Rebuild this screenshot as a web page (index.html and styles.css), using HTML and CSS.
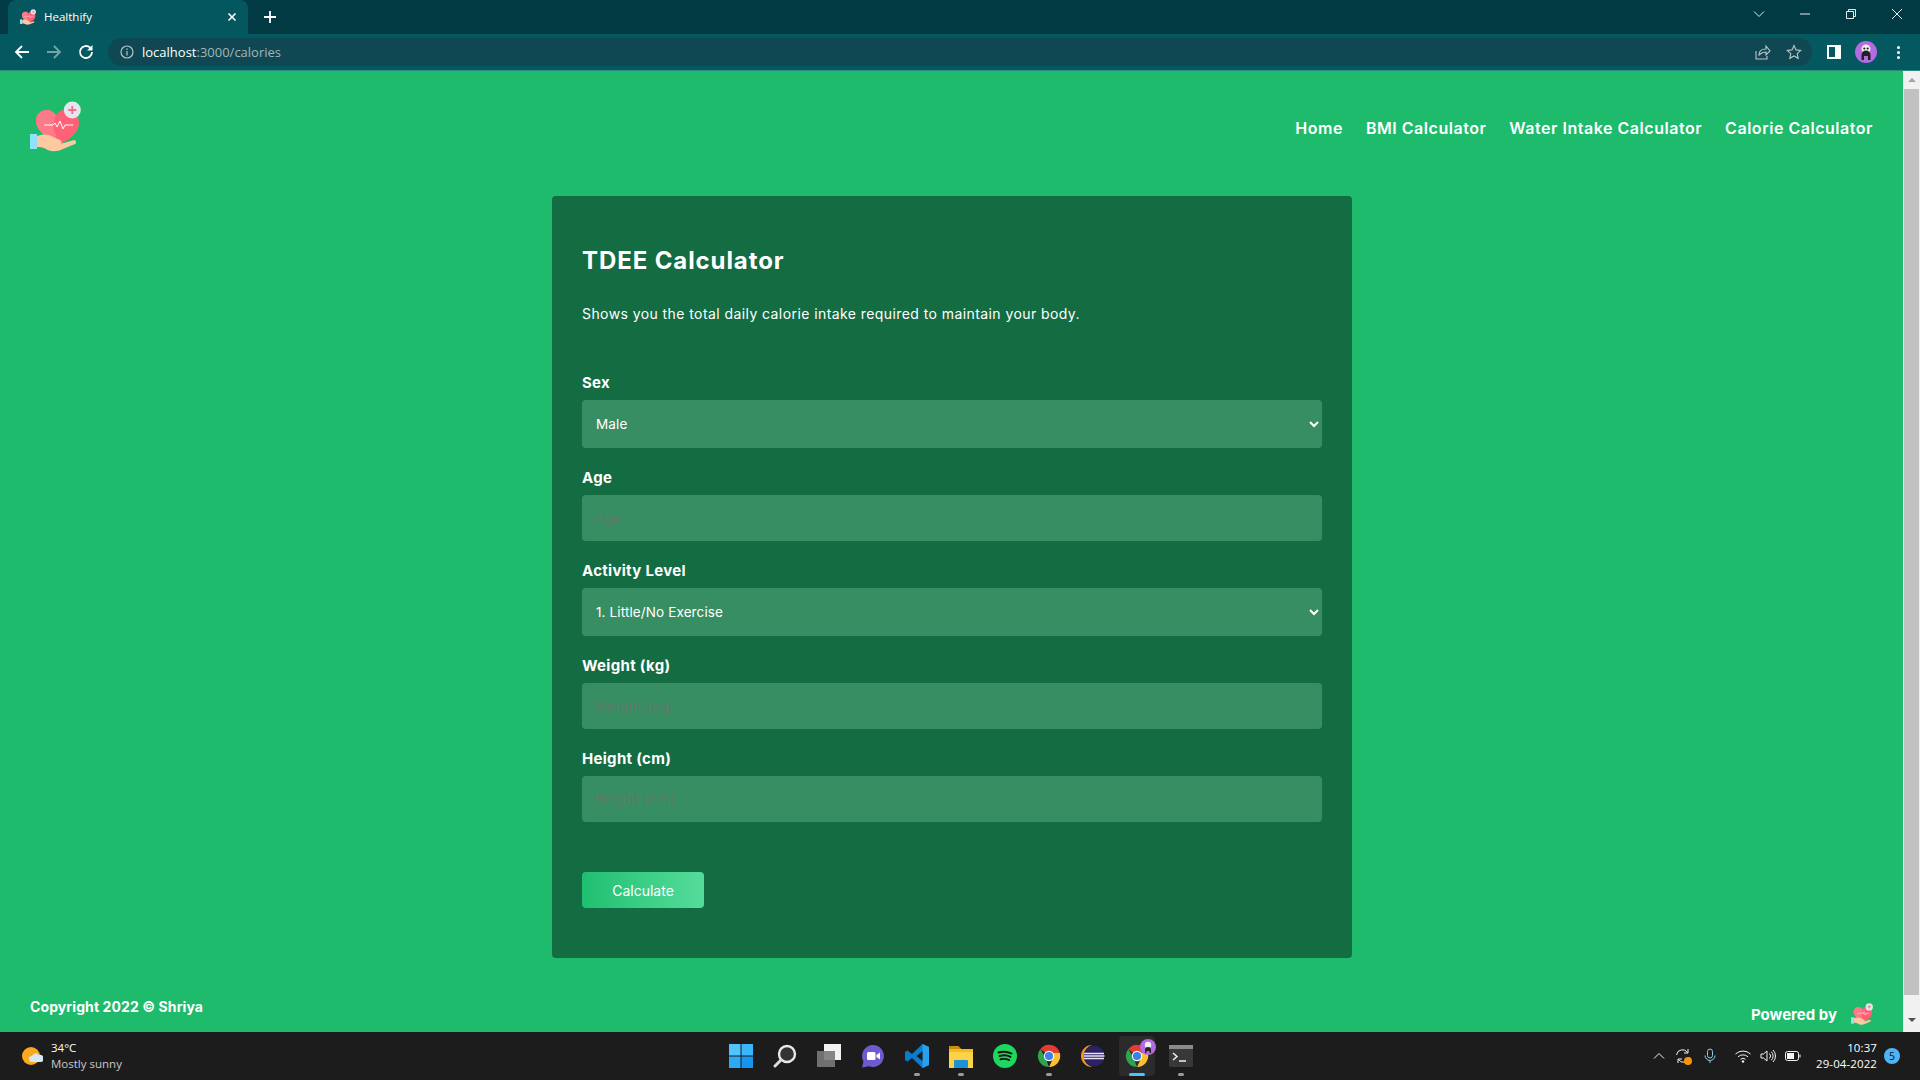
FILE: index.html
```html
<!DOCTYPE html>
<html lang="en">
<head>
    <meta charset="UTF-8">
    <meta name="viewport" content="width=device-width, initial-scale=1.0">
    <title>Healthify</title>
    <link rel="stylesheet" href="styles.css">
</head>
<body>
    <svg class="defs" width="0" height="0">
        <symbol id="logo" viewBox="0 0 51 51">
            <path d="M28 44C14 36 6 28 6 20 6 13 11 9 17 9c4 0 7 2 9 5 3-4 7-6 12-6 7 1 11 7 11 14 0 9-9 17-21 22z" fill="#ff6276"/>
            <path d="M28 44C14 36 6 28 6 20 6 13 11 9 17 9c4 0 7 2 9 5-3 7-4 14 0 20-1 4 0 7 2 10z" fill="#fd7a88"/>
            <path d="M14 24h9l2-2 2 4 3-6 3 8 2-4h8" fill="none" stroke="#fff" stroke-width="1"/>
            <circle cx="42.300" cy="9" r="8.500" fill="#e3e6f0"/>
            <path d="M42.300 5v8M38.300 9h8" stroke="#fb6c80" stroke-width="1.800"/>
            <path d="M7 35c5-2 10-2 14 0l9 4c3 2 1 4-2 4l6-1 10-3c2 0 3 3 1 4l-12 5c-6 3-12 3-17 0-4-2-6-2-9-2z" fill="#fdc9a0"/>
            <rect x="0" y="33" width="7" height="15" fill="#8fe2fb"/>
        </symbol>
        <symbol id="chrome" viewBox="0 0 24 24">
            <path d="M12 12 3.400 5A11 11 0 0 1 22.800 9H12z" fill="#e53c2f"/>
            <path d="M12 23A11 11 0 0 1 3.400 5l5 8.500L12 23z" fill="#2fa44f"/>
            <path d="M12 23A11 11 0 0 0 22.800 9H12l3.500 6.500z" fill="#fbc02d"/>
            <circle cx="12" cy="12" r="5.200" fill="#fff"/>
            <circle cx="12" cy="12" r="4.100" fill="#3b82e8"/>
        </symbol>
    </svg>

    <div class="tabstrip">
        <div class="tab">
            <svg class="tab-favicon"><use href="#logo"/></svg>
            <span class="tab-title">Healthify</span>
            <svg class="tab-close" viewBox="0 0 10 10"><path d="M1.500 1.500l7 7M8.500 1.500l-7 7"/></svg>
        </div>
        <svg class="new-tab" viewBox="0 0 12 12"><path d="M6 0v12M0 6h12"/></svg>
        <div class="window-controls">
            <svg viewBox="0 0 12 12"><path d="M1 3.500l5 5 5-5"/></svg>
            <svg viewBox="0 0 12 12"><path d="M1 6h10"/></svg>
            <svg viewBox="0 0 12 12"><path d="M1.500 3.500h7v7h-7zM3.500 3.500v-2h7v7h-2"/></svg>
            <svg viewBox="0 0 12 12"><path d="M1 1l10 10M11 1L1 11"/></svg>
        </div>
    </div>

    <div class="toolbar">
        <svg class="tool-icon" viewBox="0 0 16 16"><path d="M15 8H2M8 2L2 8l6 6"/></svg>
        <svg class="tool-icon dim" viewBox="0 0 16 16"><path d="M1 8h13M8 2l6 6-6 6"/></svg>
        <svg class="tool-icon" viewBox="0 0 16 16"><path d="M14 8a6 6 0 1 1-1.800-4.300"/><path class="solid" d="M14.500 1v5.500H9z"/></svg>
        <div class="omnibox">
            <svg class="info-icon" viewBox="0 0 14 14"><circle cx="7" cy="7" r="6"/><path d="M7 6v4.500M7 3.500v1.500"/></svg>
            <span class="url"><b>localhost</b>:3000/calories</span>
            <svg class="omni-icon share" viewBox="0 0 16 16"><path d="M1 7v8h11v-3M4 11c0-4 3-6 7-6V2l4 5-4 4V8c-3 0-5 1-7 3z"/></svg>
            <svg class="omni-icon" viewBox="0 0 16 16"><path d="M8 1.500l2 4.400 4.700.5-3.500 3.200 1 4.700L8 11.900l-4.200 2.400 1-4.700L1.300 6.400 6 5.900z"/></svg>
        </div>
        <svg class="panel-icon" viewBox="0 0 14 14"><rect width="14" height="14" fill="#fff"/><rect x="2" y="2" width="6" height="10" fill="#03595f"/></svg>
        <svg class="avatar" viewBox="0 0 22 22">
            <circle cx="11" cy="11" r="11" fill="#b36be0"/>
            <circle cx="11" cy="8" r="4.500" fill="#eee"/>
            <path d="M6.500 19v-5a4.500 4.500 0 0 1 9 0v5h-2.500v-4h-4v4z" fill="#222"/>
            <circle cx="9.300" cy="7.500" r="1.100" fill="#222"/><circle cx="12.700" cy="7.500" r="1.100" fill="#222"/>
        </svg>
        <div class="kebab"><i></i><i></i><i></i></div>
    </div>

    <div class="viewport">
        <div class="page">
            <header class="site-header">
                <svg class="site-logo"><use href="#logo"/></svg>
                <nav class="site-nav">
                    <a href="#">Home</a>
                    <a href="#">BMI Calculator</a>
                    <a href="#">Water Intake Calculator</a>
                    <a href="#">Calorie Calculator</a>
                </nav>
            </header>

            <section class="card">
                <h1>TDEE Calculator</h1>
                <p>Shows you the total daily calorie intake required to maintain your body.</p>

                <form class="calc-form">
                    <label for="sex">Sex</label>
                    <select id="sex" class="field">
                        <option>Male</option>
                        <option>Female</option>
                    </select>

                    <label for="age">Age</label>
                    <input type="number" id="age" class="field" placeholder="Age">

                    <label for="activity">Activity Level</label>
                    <select id="activity" class="field">
                        <option>1. Little/No Exercise</option>
                        <option>2. Light Exercise</option>
                        <option>3. Moderate Exercise</option>
                    </select>

                    <label for="weight">Weight (kg)</label>
                    <input type="number" id="weight" class="field" placeholder="Weight (kg)">

                    <label for="height">Height (cm)</label>
                    <input type="number" id="height" class="field" placeholder="Height (cm)">

                    <button type="submit">Calculate</button>
                </form>
            </section>

            <footer class="site-footer">
                <span class="copyright">Copyright 2022 © Shriya</span>
                <span class="powered">Powered by <svg class="powered-logo"><use href="#logo"/></svg></span>
            </footer>
        </div>

        <div class="scrollbar">
            <span class="scroll-up"></span>
            <span class="scroll-thumb"></span>
            <span class="scroll-down"></span>
        </div>
    </div>

    <div class="taskbar">
        <div class="weather">
            <svg class="weather-icon" viewBox="0 0 22 22">
                <circle cx="10" cy="11" r="9" fill="#f9a91f"/>
                <path d="M11 17a3 3 0 0 1 0-6 4 4 0 0 1 7-1 3.500 3.500 0 0 1 2 7z" fill="#d7e6f5"/>
            </svg>
            <div class="weather-text">
                <span class="temp">34°C</span>
                <span class="sky">Mostly sunny</span>
            </div>
        </div>

        <div class="task-icons">
            <div class="task-icon">
                <svg viewBox="0 0 24 24">
                    <rect x="0" y="0" width="11.500" height="11.500" fill="#4fc6fb"/><rect x="12.500" y="0" width="11.500" height="11.500" fill="#3bb6fa"/>
                    <rect x="0" y="12.500" width="11.500" height="11.500" fill="#2ba8f6"/><rect x="12.500" y="12.500" width="11.500" height="11.500" fill="#1794f0"/>
                </svg>
            </div>
            <div class="task-icon">
                <svg viewBox="0 0 24 24"><circle cx="14" cy="10" r="8" fill="#333" stroke="#e8e8e8" stroke-width="2.400"/><path d="M8 16l-6 6" stroke="#ddd" stroke-width="3" stroke-linecap="round"/></svg>
            </div>
            <div class="task-icon">
                <svg viewBox="0 0 24 24"><rect x="7" y="0" width="17" height="16" fill="#f2f2f2"/><rect x="0" y="7" width="18" height="16" fill="#7a7a7a" opacity=".9"/></svg>
            </div>
            <div class="task-icon">
                <svg viewBox="0 0 24 24"><path d="M12 1a11 11 0 1 1-4 21.300L1 23.500l1.500-6A11 11 0 0 1 12 1z" fill="#6c5ccf"/><rect x="6" y="8" width="8.500" height="8" rx="1.500" fill="#fff"/><path d="M15.500 11l3.500-2.500v7L15.500 13z" fill="#fff"/></svg>
            </div>
            <div class="task-icon running">
                <svg viewBox="0 0 24 24"><path d="M17.500 0L7 10 2.500 6.500 0 8v8l2.500 1.500L7 14l10.500 10 6.500-3V3z" fill="#0a7ccc"/><path d="M17.500 0L24 3v18l-6.500 3z" fill="#27a0ee"/><path d="M17.500 7l-6 5 6 5z" fill="#1c1c1c"/></svg>
            </div>
            <div class="task-icon running">
                <svg viewBox="0 0 24 24"><path d="M0 2h9l3 3h12v19H0z" fill="#f6b91e"/><path d="M0 2h9l3 3H0z" fill="#c98e12"/><path d="M0 8h24v16H0z" fill="#fdd247"/><rect x="5" y="16" width="14" height="8" rx="1" fill="#1f8fd6"/></svg>
            </div>
            <div class="task-icon">
                <svg viewBox="0 0 24 24"><circle cx="12" cy="12" r="12" fill="#1ed760"/><path d="M5.500 8.500c4.500-1.300 9-1 13 1M6.500 12c3.500-1 8-.8 11 .9M7.500 15.300c3-.7 6-.5 8.800.8" fill="none" stroke="#191414" stroke-width="1.900" stroke-linecap="round"/></svg>
            </div>
            <div class="task-icon running">
                <svg><use href="#chrome"/></svg>
            </div>
            <div class="task-icon">
                <svg viewBox="0 0 24 24"><path d="M11 1a11 11 0 0 0 0 22A11.500 11.500 0 0 1 11 1z" fill="#f39a1c"/><circle cx="13" cy="12" r="10.500" fill="#2c2263"/><path d="M3 9.500h20M2.500 12h21M3 14.500h20" stroke="#e8e4f5" stroke-width="1.300"/></svg>
            </div>
            <div class="task-icon active">
                <svg><use href="#chrome"/></svg>
                <svg class="task-badge" viewBox="0 0 16 16"><circle cx="8" cy="8" r="8" fill="#b36be0"/><circle cx="8" cy="6" r="3.200" fill="#eee"/><path d="M5 14v-3a3 3 0 0 1 6 0v3H9.500v-2h-3v2z" fill="#222"/></svg>
            </div>
            <div class="task-icon running">
                <svg viewBox="0 0 24 24"><rect y="1" width="24" height="22" rx="1.500" fill="#383838"/><rect y="1" width="24" height="4" fill="#8a8a8a"/><path d="M4 9l4 3.500L4 16" fill="none" stroke="#f0f0f0" stroke-width="1.500"/><path d="M10 17h7" stroke="#f0f0f0" stroke-width="1.500"/></svg>
            </div>
        </div>

        <div class="tray">
            <svg class="tray-icon small" viewBox="0 0 12 12"><path d="M1 8.500l5-5 5 5"/></svg>
            <span class="tray-sync">
                <svg class="tray-icon" viewBox="0 0 16 16"><path d="M1.500 7a6 6 0 0 1 11-2.500M14.500 9a6 6 0 0 1-11 2.500M13 1v4H9M3 15v-4h4"/></svg>
                <i class="sync-dot"></i>
            </span>
            <svg class="tray-icon mic" viewBox="0 0 16 16"><rect x="5.500" y="1" width="5" height="9" rx="2.500"/><path d="M3 7.500a5 5 0 0 0 10 0M8 12.500V15"/></svg>
            <svg class="tray-icon" viewBox="0 0 16 16"><path d="M.5 6a11 11 0 0 1 15 0M3 8.800a7.500 7.500 0 0 1 10 0M5.500 11.300a3.800 3.800 0 0 1 5 0"/><circle class="solid" cx="8" cy="13.500" r="1.200"/></svg>
            <svg class="tray-icon" viewBox="0 0 16 16"><path d="M1 6v4h2.500L7 13V3L3.500 6zM9.500 5.500a3.500 3.500 0 0 1 0 5M11.300 3.700a6 6 0 0 1 0 8.600M13 2a8.500 8.500 0 0 1 0 12"/></svg>
            <svg class="tray-icon" viewBox="0 0 16 16"><rect x=".5" y="3.500" width="13" height="9" rx="2"/><rect class="solid" x="2" y="5" width="7" height="6"/><path d="M15 6.500v3"/></svg>
            <div class="clock">
                <span>10:37</span>
                <span>29-04-2022</span>
            </div>
            <span class="notify">5</span>
        </div>
    </div>
</body>
</html>
```

FILE: styles.css
```css
* {
    box-sizing: border-box;
}

html, body {
    margin: 0;
    padding: 0;
    height: 1080px;
    overflow: hidden;
}

body {
    font-family: Inter, "Liberation Sans", sans-serif;
    background-color: #1dbb6b;
    color: white;
}

.defs {
    display: block;
    height: 0;
}

/* browser chrome */
.tabstrip {
    display: flex;
    align-items: center;
    height: 34px;
    background-color: #023a44;
}

.tab {
    display: flex;
    align-items: center;
    width: 240px;
    height: 34px;
    margin-left: 8px;
    padding: 0 12px;
    background-color: #04575f;
    border-radius: 8px 8px 0 0;
    font-family: "Open Sans", sans-serif;
    font-size: 11.500px;
}

.tab-favicon {
    width: 16px;
    height: 16px;
}

.tab-title {
    flex: 1;
    margin-left: 8px;
    margin-bottom: 2px;
}

.tab-close {
    width: 10px;
    height: 10px;
    margin-right: -1px;
    fill: none;
    stroke: #fff;
    stroke-width: 1.600;
}

.new-tab {
    width: 12px;
    height: 12px;
    margin-left: 16px;
    fill: none;
    stroke: #fff;
    stroke-width: 1.800;
}

.window-controls {
    display: flex;
    gap: 34px;
    margin-left: auto;
    margin-bottom: 6px;
    padding-right: 17px;
}

.window-controls svg {
    width: 12px;
    height: 12px;
    fill: none;
    stroke: #e6ecec;
    stroke-width: 1;
}

.toolbar {
    display: flex;
    align-items: center;
    height: 37px;
    padding: 0 0 0 14px;
    background-color: #03595f;
    border-bottom: 1px solid #2a8a80;
}

.tool-icon {
    width: 16px;
    height: 16px;
    margin-right: 16px;
    fill: none;
    stroke: #fff;
    stroke-width: 1.800;
}

.tool-icon.dim {
    opacity: 0.45;
}

.tool-icon .solid {
    fill: #fff;
    stroke: none;
}

.omnibox {
    display: flex;
    align-items: center;
    width: 1704px;
    height: 28px;
    margin-left: -2px;
    padding: 0 8px 0 12px;
    background-color: #0f4752;
    border-radius: 14px;
    font-family: "Open Sans", sans-serif;
    font-size: 13px;
}

.info-icon {
    width: 14px;
    height: 14px;
    fill: none;
    stroke: #b8c6c8;
    stroke-width: 1.200;
}

.url {
    flex: 1;
    margin-left: 8px;
    color: #a3b6b9;
}

.url b {
    font-weight: 400;
    color: #fff;
}

.omni-icon {
    width: 16px;
    height: 16px;
    margin-left: 14px;
    margin-right: 2px;
    fill: none;
    stroke: #b8c6c8;
    stroke-width: 1.100;
}

.omni-icon.share {
    margin-right: 1px;
}

.panel-icon {
    width: 14px;
    height: 14px;
    margin-left: 15px;
}

.avatar {
    width: 22px;
    height: 22px;
    margin-left: 14px;
}

.kebab {
    display: flex;
    flex-direction: column;
    gap: 2px;
    margin-left: 20px;
}

.kebab i {
    display: block;
    width: 3px;
    height: 3px;
    background-color: #fff;
    border-radius: 50%;
}

/* page */
.viewport {
    display: flex;
    height: 961px;
}

.page {
    flex: 1;
    min-width: 0;
}

.site-header {
    display: flex;
    align-items: center;
    justify-content: space-between;
    padding: 30px 30px 44px 30px;
}

.site-logo {
    width: 51px;
    height: 51px;
}

.site-nav {
    display: flex;
    gap: 23px;
    margin-top: 3px;
}

.site-nav a {
    color: white;
    text-decoration: none;
    font-size: 16px;
    font-weight: 600;
    letter-spacing: 0.53px;
}

.card {
    width: 800px;
    height: 762px;
    margin-left: 552px;
    padding: 50px 30px;
    background-color: #146c43;
    border-radius: 4px;
}

.card h1 {
    margin: 0;
    font-size: 24px;
    font-weight: 700;
    line-height: 29px;
    letter-spacing: 0.9px;
}

.card p {
    margin: 28px 0 48px;
    font-size: 14px;
    line-height: 21px;
    letter-spacing: 0.42px;
}

.calc-form {
    display: flex;
    flex-direction: column;
}

.calc-form label {
    height: 22px;
    margin-bottom: 6px;
    font-size: 15px;
    font-weight: 700;
    line-height: 22px;
    letter-spacing: 0.3px;
}

.field {
    width: 100%;
    height: 46px;
    margin-bottom: 19px;
    padding: 0 12px;
    background-color: #388e63;
    border: none;
    border-radius: 4px;
    color: white;
    font-family: inherit;
    font-size: 13.500px;
    letter-spacing: 0.12px;
    outline: none;
}

select.field {
    height: 48px;
    padding-left: 10px;
    padding-right: 13px;
}

.field::placeholder {
    color: #5f7a69;
    letter-spacing: 0.6px;
}

.calc-form button {
    width: 122px;
    height: 36px;
    margin-top: 31px;
    background-image: linear-gradient(to right, #20bf70, #55dc9b);
    border: none;
    border-radius: 4px;
    color: white;
    font-family: inherit;
    font-size: 14px;
    cursor: pointer;
}

.site-footer {
    display: flex;
    justify-content: space-between;
    margin-top: 38px;
    padding: 0 30px;
    font-size: 15px;
    font-weight: 700;
}

.copyright {
    font-size: 14px;
    line-height: 22px;
    letter-spacing: 0.1px;
}

.powered {
    display: flex;
    align-items: center;
    gap: 14px;
    height: 24px;
    margin-top: 6px;
}

.powered-logo {
    width: 22px;
    height: 22px;
}

.scrollbar {
    display: flex;
    flex-direction: column;
    align-items: center;
    width: 17px;
    background-color: #f1f1f1;
}

.scroll-up,
.scroll-down {
    width: 0;
    height: 0;
    border-left: 4px solid transparent;
    border-right: 4px solid transparent;
}

.scroll-up {
    margin-top: 7px;
    border-bottom: 4px solid #a3a3a3;
}

.scroll-down {
    margin-top: 23px;
    border-top: 4px solid #505050;
}

.scroll-thumb {
    width: 15px;
    height: 906px;
    margin-top: 7px;
    background-color: #c1c1c1;
}

/* taskbar */
.taskbar {
    display: grid;
    grid-template-columns: 1fr auto 1fr;
    align-items: center;
    height: 48px;
    background-color: #1c1c1c;
    font-family: "Open Sans", sans-serif;
    font-size: 11.500px;
}

.weather {
    display: flex;
    align-items: center;
    padding-left: 21px;
}

.weather-icon {
    width: 22px;
    height: 22px;
}

.weather-text {
    display: flex;
    flex-direction: column;
    margin-left: 8px;
    line-height: 16px;
}

.sky {
    color: #c9c9c9;
}

.task-icons {
    display: flex;
    padding-left: 2px;
}

.task-icon {
    position: relative;
    display: flex;
    align-items: center;
    justify-content: center;
    width: 44px;
    height: 48px;
}

.task-icon svg {
    width: 24px;
    height: 24px;
}

.task-icon.running::after,
.task-icon.active::after {
    content: "";
    position: absolute;
    left: 19px;
    bottom: 4px;
    width: 6px;
    height: 3px;
    background-color: #9b9b9b;
    border-radius: 2px;
}

.task-icon.active {
    background-color: #2b2b2b;
    background-clip: content-box;
    padding: 4px;
    border-radius: 8px;
}

.task-icon.active::after {
    left: 14px;
    width: 16px;
    background-color: #4cc2ff;
}

.task-icon .task-badge {
    position: absolute;
    top: 7px;
    right: 3px;
    width: 16px;
    height: 16px;
}

.tray {
    display: flex;
    align-items: center;
    justify-content: flex-end;
    gap: 9px;
    padding-right: 20px;
}

.tray-icon {
    width: 16px;
    height: 16px;
    fill: none;
    stroke: #f2f2f2;
    stroke-width: 1;
}

.tray-icon.small {
    width: 12px;
    height: 12px;
    margin-right: 1px;
}

.tray-icon.mic {
    margin: 0 8px 0 2px;
    stroke: #8ecbe6;
}

.tray-icon .solid {
    fill: #f2f2f2;
    stroke: none;
}

.tray-sync {
    position: relative;
    display: flex;
}

.sync-dot {
    position: absolute;
    right: -1px;
    bottom: -1px;
    width: 8px;
    height: 8px;
    background-color: #f7930e;
    border-radius: 50%;
}

.clock {
    display: flex;
    flex-direction: column;
    align-items: flex-end;
    margin-left: 6px;
    margin-right: -2px;
    line-height: 16px;
    letter-spacing: 0.1px;
}

.notify {
    width: 16px;
    height: 16px;
    background-color: #4db5f5;
    border-radius: 50%;
    color: #111;
    font-size: 10.500px;
    line-height: 16px;
    text-align: center;
}
```
